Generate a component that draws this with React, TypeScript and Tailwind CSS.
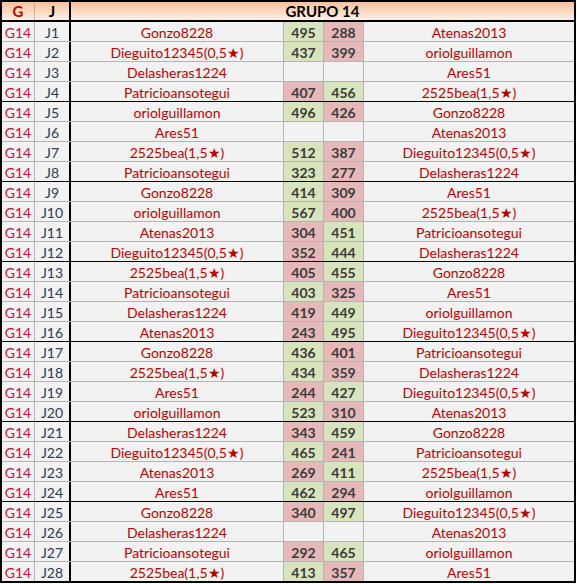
const rows: [string, number | null, number | null, string][] = [
  ['Gonzo8228', 495, 288, 'Atenas2013'],
  ['Dieguito12345(0,5★)', 437, 399, 'oriolguillamon'],
  ['Delasheras1224', null, null, 'Ares51'],
  ['Patricioansotegui', 407, 456, '2525bea(1,5★)'],
  ['oriolguillamon', 496, 426, 'Gonzo8228'],
  ['Ares51', null, null, 'Atenas2013'],
  ['2525bea(1,5★)', 512, 387, 'Dieguito12345(0,5★)'],
  ['Patricioansotegui', 323, 277, 'Delasheras1224'],
  ['Gonzo8228', 414, 309, 'Ares51'],
  ['oriolguillamon', 567, 400, '2525bea(1,5★)'],
  ['Atenas2013', 304, 451, 'Patricioansotegui'],
  ['Dieguito12345(0,5★)', 352, 444, 'Delasheras1224'],
  ['2525bea(1,5★)', 405, 455, 'Gonzo8228'],
  ['Patricioansotegui', 403, 325, 'Ares51'],
  ['Delasheras1224', 419, 449, 'oriolguillamon'],
  ['Atenas2013', 243, 495, 'Dieguito12345(0,5★)'],
  ['Gonzo8228', 436, 401, 'Patricioansotegui'],
  ['2525bea(1,5★)', 434, 359, 'Delasheras1224'],
  ['Ares51', 244, 427, 'Dieguito12345(0,5★)'],
  ['oriolguillamon', 523, 310, 'Atenas2013'],
  ['Delasheras1224', 343, 459, 'Gonzo8228'],
  ['Dieguito12345(0,5★)', 465, 241, 'Patricioansotegui'],
  ['Atenas2013', 269, 411, '2525bea(1,5★)'],
  ['Ares51', 462, 294, 'oriolguillamon'],
  ['Gonzo8228', 340, 497, 'Dieguito12345(0,5★)'],
  ['Delasheras1224', null, null, 'Atenas2013'],
  ['Patricioansotegui', 292, 465, 'oriolguillamon'],
  ['2525bea(1,5★)', 413, 357, 'Ares51'],
];

const cols = 'grid grid-cols-[33px_36px_213px_40px_40px_210px]';

// higher score of the pair gets green, lower gets red
function scoreBg(a: number | null, b: number | null) {
  if (a == null || b == null) return '';
  return a > b ? 'bg-[#d8e4bc]' : 'bg-[#e6b8b7]';
}

export default function App() {
  return (
    <div className="bg-white" style={{ fontFamily: 'Lato, "Open Sans", sans-serif' }}>
      <div className="w-[576px] border-2 border-black bg-[#f2f2f2] text-[14px] leading-none">
        <div className={`${cols} h-[20px] border-b-2 border-black bg-gradient-to-b from-[#f7c199] to-[#fdf0e8] text-[15px] font-bold`}>
          <div className="flex items-center justify-center border-r border-[#b4b4b4] pt-px text-[#c00000]">G</div>
          <div className="flex items-center justify-center border-r-2 border-black pt-px text-black">J</div>
          <div className="col-span-4 flex items-center justify-center pt-px text-black">GRUPO 14</div>
        </div>
        {rows.map((r, i) => {
          const last = i === rows.length - 1;
          const groupEnd = (i + 1) % 4 === 0;
          const rowBorder = last
            ? 'h-[19px]'
            : groupEnd
              ? 'h-[20px] border-b border-black'
              : 'h-[20px] border-b border-[#b4b4b4]';
          const [a, b] = [r[1], r[2]];
          return (
            <div key={i} className={`${cols} ${rowBorder}`}>
              <div className="flex items-center justify-center border-r border-[#b4b4b4] pt-[2px] text-[#c0143c]">G14</div>
              <div className="flex items-center justify-center border-r-2 border-black pt-[2px] text-[#2f3b4f]">J{i + 1}</div>
              <div className="flex items-center justify-center border-r border-[#b4b4b4] pt-[2px] text-[#c00000]">{r[0]}</div>
              <div className={`flex items-center justify-center border-r border-[#b4b4b4] pt-[2px] font-bold text-[#3b3b3b] ${scoreBg(a, b)}`}>
                {a ?? ''}
              </div>
              <div className={`flex items-center justify-center border-r border-[#b4b4b4] pt-[2px] font-bold text-[#3b3b3b] ${scoreBg(b, a)}`}>
                {b ?? ''}
              </div>
              <div className="flex items-center justify-center pt-[2px] text-[#c00000]">{r[3]}</div>
            </div>
          );
        })}
      </div>
    </div>
  );
}
